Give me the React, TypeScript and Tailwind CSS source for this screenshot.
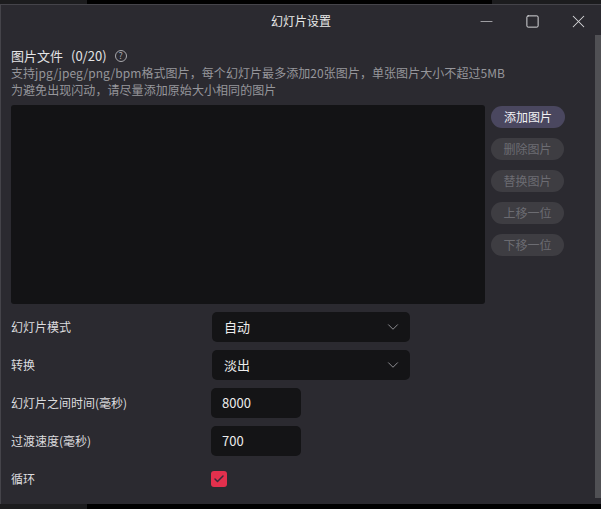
import { Check, ChevronDown, Minus, Square, X } from "lucide-react";

const font = { fontFamily: '"Noto Sans CJK SC", "Noto Sans", sans-serif' };

const sideButtons = ["删除图片", "替换图片", "上移一位", "下移一位"];

function Select({ value }: { value: string }) {
  return (
    <div className="flex h-[30px] w-[198px] items-center justify-between rounded-[5px] bg-[#141416] pl-[12px] pr-[8px] text-[13px] text-[#ececec]">
      <span>{value}</span>
      <ChevronDown size={18} strokeWidth={1.2} className="text-[#9a9a9e]" />
    </div>
  );
}

function NumberBox({ value }: { value: string }) {
  return (
    <div className="flex h-[30px] w-[90px] items-center rounded-[5px] bg-[#141416] pl-[11px] text-[13px] text-[#ececec]">
      {value}
    </div>
  );
}

export default function App() {
  return (
    <div className="flex h-[509px] w-[601px] flex-col overflow-hidden bg-black" style={font}>
      <div className="flex h-[4px] shrink-0">
        <div className="w-[87px] bg-[#1c1c1e]" />
        <div className="w-[405px] bg-black" />
        <div className="flex-1 bg-[#1c1c1e]" />
      </div>

      <div className="relative flex h-[500px] shrink-0 flex-col border-l border-t border-[#45444a] bg-[#2b2a30]">
        {/* title bar */}
        <div className="relative flex h-[32px] shrink-0 items-center justify-center text-[12px] text-[#e9e9e9]">
          幻灯片设置
          <div className="absolute right-0 top-0 flex h-full items-center">
            <div className="flex w-[46px] justify-center">
              <Minus size={19} strokeWidth={1.3} className="text-[#9d9da1]" />
            </div>
            <div className="flex w-[46px] justify-center">
              <Square size={15} strokeWidth={1.5} className="text-[#e2e2e4]" />
            </div>
            <div className="flex w-[46px] justify-center">
              <X size={21} strokeWidth={1.2} className="text-[#d8d8db]" />
            </div>
          </div>
        </div>

        <div className="absolute right-0 top-[30px] h-[463px] w-[6px] bg-[#505054]" />

        <div className="flex flex-col pl-[10px] pt-[10px]">
          <div className="flex h-[17px] items-center text-[13px] text-[#e4e4e6]">
            <span>图片文件</span>
            <span className="ml-[8px]">(0/20)</span>
            <span className="ml-[8px] flex h-[12px] w-[12px] items-center justify-center rounded-full border border-[#a8a8ac] text-[9px] leading-none text-[#a8a8ac]">
              ?
            </span>
          </div>
          <div className="h-[17px] text-[12px] leading-[17px] tracking-[0.06px] text-[#96969b]">
            支持jpg/jpeg/png/bpm格式图片，每个幻灯片最多添加20张图片，单张图片大小不超过5MB
          </div>
          <div className="h-[17px] text-[12px] leading-[17px] tracking-[0.06px] text-[#96969b]">
            为避免出现闪动，请尽量添加原始大小相同的图片
          </div>

          <div className="mt-[7px] flex gap-[6px]">
            <div className="h-[199px] w-[474px] rounded-[3px] bg-[#131315]" />
            <div className="flex flex-col gap-[10px] pt-[1px]">
              <div className="flex h-[22px] w-[74px] items-center justify-center rounded-full bg-[#4a475f] text-[12px] text-[#f2f2f5]">
                添加图片
              </div>
              {sideButtons.map((b) => (
                <div
                  key={b}
                  className="flex h-[22px] w-[73px] items-center justify-center rounded-full bg-[#3e3d42] text-[12px] text-[#6c6c72]"
                >
                  {b}
                </div>
              ))}
            </div>
          </div>

          <div className="mt-[8px] flex flex-col gap-[8px] text-[12px] text-[#dcdcdf]">
            <div className="flex h-[30px] items-center">
              <span className="w-[201px]">幻灯片模式</span>
              <Select value="自动" />
            </div>
            <div className="flex h-[30px] items-center">
              <span className="w-[201px]">转换</span>
              <Select value="淡出" />
            </div>
            <div className="flex h-[30px] items-center">
              <span className="w-[200px]">幻灯片之间时间(毫秒)</span>
              <NumberBox value="8000" />
            </div>
            <div className="flex h-[30px] items-center">
              <span className="w-[200px]">过渡速度(毫秒)</span>
              <NumberBox value="700" />
            </div>
            <div className="flex h-[30px] items-center">
              <span className="w-[200px]">循环</span>
              <div className="flex h-[16px] w-[16px] items-center justify-center rounded-[3px] bg-[#e3304d]">
                <Check size={12} strokeWidth={3} className="text-[#3a2a3a]" />
              </div>
            </div>
          </div>
        </div>
      </div>

      <div className="flex flex-1">
        <div className="w-[87px] bg-[#1c1c1e]" />
        <div className="flex-1 bg-black" />
      </div>
    </div>
  );
}
